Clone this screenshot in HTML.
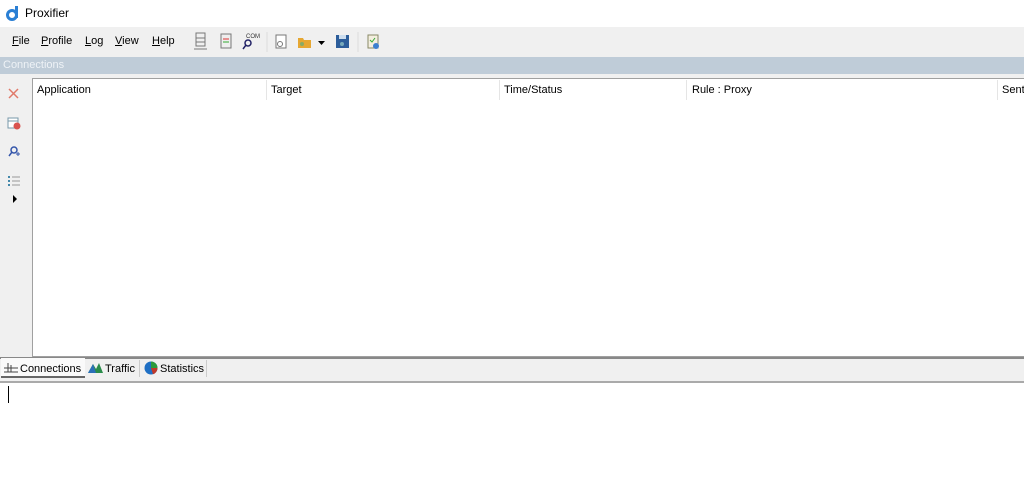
<!DOCTYPE html>
<html><head><style>
*{margin:0;padding:0;box-sizing:border-box}
body{width:1024px;height:493px;overflow:hidden;background:#fff;font-family:"Liberation Sans",sans-serif;font-size:11px;color:#000;position:relative}
.a{position:absolute}
u{text-decoration:underline}
</style></head><body>
<div class="a" style="left:0;top:0;width:1024px;height:27px;background:#fff"></div>
<svg class="a" style="left:6px;top:5px" width="14" height="16"><circle cx="6" cy="10" r="4.5" fill="none" stroke="#2a7fd4" stroke-width="3"/><rect x="9" y="1" width="3" height="12" fill="#2a7fd4"/></svg>
<div class="a" style="left:25px;top:6px;font-size:12px">Proxifier</div>
<div class="a" style="left:0;top:27px;width:1024px;height:30px;background:#f0f0f0"></div>
<div class="a" style="left:12px;top:35px"><u>F</u>ile</div>
<div class="a" style="left:41px;top:35px"><u>P</u>rofile</div>
<div class="a" style="left:85px;top:35px"><u>L</u>og</div>
<div class="a" style="left:115px;top:35px"><u>V</u>iew</div>
<div class="a" style="left:152px;top:35px"><u>H</u>elp</div>
<svg class="a" style="left:190px;top:30px" width="200" height="24">
<rect x="6" y="3" width="9" height="13" fill="none" stroke="#777"/><line x1="6" y1="8" x2="15" y2="8" stroke="#777"/><line x1="6" y1="12" x2="15" y2="12" stroke="#777"/><line x1="4" y1="19" x2="17" y2="19" stroke="#777"/>
<rect x="31" y="4" width="10" height="14" fill="#eee" stroke="#777"/><line x1="33" y1="9" x2="39" y2="9" stroke="#d33"/><line x1="33" y1="12" x2="39" y2="12" stroke="#3a3"/>
<circle cx="58" cy="13" r="3" fill="none" stroke="#226" stroke-width="1.5"/><line x1="56" y1="15" x2="53" y2="19" stroke="#226" stroke-width="1.5"/><text x="56" y="8" font-size="6" fill="#333">COM</text>
<line x1="77" y1="2" x2="77" y2="22" stroke="#ddd"/>
<rect x="86" y="5" width="10" height="13" fill="#fff" stroke="#777"/><circle cx="90" cy="14" r="2.5" fill="none" stroke="#777"/>
<path d="M108 8h5l1 2h7v8h-13z" fill="#e6a732"/><circle cx="112" cy="14" r="2" fill="#8a6"/><path d="M128 11h7l-3.5 4z" fill="#000"/>
<rect x="146" y="5" width="13" height="13" fill="#2c5d9a"/><rect x="149" y="5" width="7" height="4" fill="#cde"/><circle cx="152" cy="14" r="2" fill="#7ab"/>
<line x1="168" y1="2" x2="168" y2="22" stroke="#ddd"/>
<rect x="178" y="5" width="10" height="13" fill="#f4efe0" stroke="#886"/><path d="M180 10l2 2 3-4" stroke="#3a3" fill="none"/><circle cx="186" cy="16" r="3" fill="#3b7fd0"/>
</svg>
<div class="a" style="left:0;top:57px;width:1024px;height:17px;background:#bfccd8"></div>
<div class="a" style="left:3px;top:59px;color:#eef2f6">Connections</div>
<div class="a" style="left:0;top:74px;width:1024px;height:284px;background:#f0f0f0"></div>
<div class="a" style="left:32px;top:78px;width:992px;height:279px;background:#fff;border:1px solid #a0a0a0;border-right:none"></div>
<div class="a" style="left:37px;top:84px">Application</div>
<div class="a" style="left:266px;top:80px;width:1px;height:20px;background:#e5e5e5"></div>
<div class="a" style="left:271px;top:84px">Target</div>
<div class="a" style="left:499px;top:80px;width:1px;height:20px;background:#e5e5e5"></div>
<div class="a" style="left:504px;top:84px">Time/Status</div>
<div class="a" style="left:686px;top:80px;width:1px;height:20px;background:#e5e5e5"></div>
<div class="a" style="left:692px;top:84px">Rule : Proxy</div>
<div class="a" style="left:997px;top:80px;width:1px;height:20px;background:#e5e5e5"></div>
<div class="a" style="left:1002px;top:84px">Sent</div>
<svg class="a" style="left:0;top:80px" width="30" height="130">
<path d="M9 9l9 9M18 9l-9 9" stroke="#e07a6a" stroke-width="1.5"/>
<rect x="8" y="38" width="10" height="10" fill="#fff" stroke="#79a"/><line x1="8" y1="41" x2="18" y2="41" stroke="#79a"/><circle cx="17" cy="46" r="3.5" fill="#d9534f"/>
<circle cx="14" cy="70" r="3" fill="none" stroke="#35a" stroke-width="1.5"/><line x1="12" y1="72" x2="9" y2="76" stroke="#35a" stroke-width="1.5"/><path d="M16 74h4M18 72v4" stroke="#35a"/>
<g fill="#48a"><rect x="8" y="96" width="2" height="2"/><rect x="8" y="100" width="2" height="2"/><rect x="8" y="104" width="2" height="2"/></g><g stroke="#999"><line x1="12" y1="97" x2="20" y2="97"/><line x1="12" y1="101" x2="20" y2="101"/><line x1="12" y1="105" x2="20" y2="105"/></g>
<path d="M13 115l4 4-4 4z" fill="#000"/>
</svg>
<div class="a" style="left:0;top:357px;width:1024px;height:2px;background:#888"></div>
<div class="a" style="left:0;top:359px;width:1024px;height:22px;background:#f0f0f0"></div>
<div class="a" style="left:1px;top:358px;width:84px;height:20px;background:#fafafa;border-bottom:2px solid #666"></div>
<svg class="a" style="left:3px;top:362px" width="16" height="12"><path d="M1 6h14M1 10h14M5 1v9M8 3v7" stroke="#444" fill="none"/></svg>
<div class="a" style="left:20px;top:363px">Connections</div>
<svg class="a" style="left:88px;top:362px" width="16" height="12"><path d="M0 11l5-9 3 5 3-6 4 10z" fill="#2a8c4a"/><path d="M0 11l5-9 3 9z" fill="#2b6fb8"/></svg>
<div class="a" style="left:105px;top:363px">Traffic</div>
<div class="a" style="left:139px;top:360px;width:1px;height:17px;background:#ccc"></div>
<svg class="a" style="left:144px;top:361px" width="14" height="14"><circle cx="7" cy="7" r="6.5" fill="#1f6fc4"/><path d="M7 7V.5A6.5 6.5 0 0 1 13.5 7z" fill="#2c9a3c"/><path d="M7 7h6.5A6.5 6.5 0 0 1 9 13.2z" fill="#c0392b"/></svg>
<div class="a" style="left:160px;top:363px">Statistics</div>
<div class="a" style="left:206px;top:360px;width:1px;height:17px;background:#ccc"></div>
<div class="a" style="left:0;top:381px;width:1024px;height:2px;background:#aaa"></div>
<div class="a" style="left:8px;top:386px;width:1px;height:17px;background:#000"></div>
</body></html>
